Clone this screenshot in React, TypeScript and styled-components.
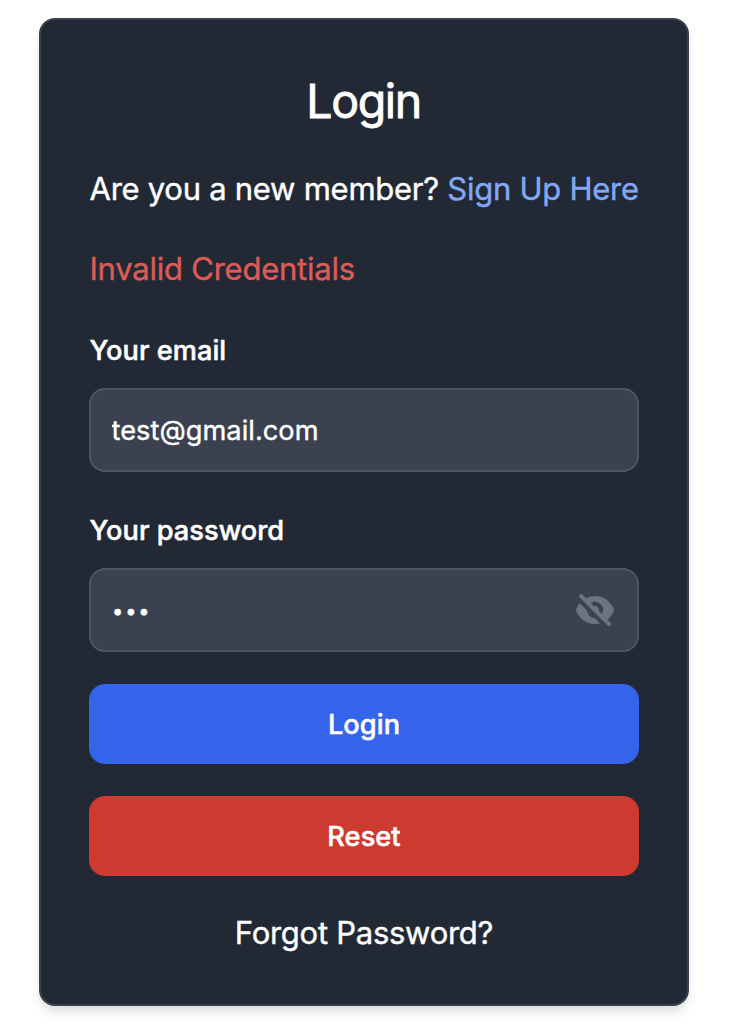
import React, { useState } from "react";
import styled, { createGlobalStyle } from "styled-components";
import { HiEye, HiEyeOff } from "react-icons/hi";

const GlobalStyle = createGlobalStyle`
  *, *::before, *::after { box-sizing: border-box; }
  body {
    margin: 0;
    background: #fff;
    font-family: Inter, "Liberation Sans", sans-serif;
    color: #fff;
    -webkit-font-smoothing: antialiased;
  }
`;

const Page = styled.main`
  height: 1034px;
  padding: 18px 43px 28px 39px;
  overflow: hidden;
`;

const Card = styled.form`
  height: 988px;
  padding: 45px 48px;
  background: #222935;
  border: 2px solid #394150;
  border-radius: 16px;
  box-shadow: 0 8px 12px -2px rgba(0, 0, 0, 0.1), 0 4px 8px -2px rgba(0, 0, 0, 0.06);
  display: flex;
  flex-direction: column;
`;

const Title = styled.h1`
  margin: 0;
  font-size: 46.5px;
  line-height: 72px;
  font-weight: 400;
  letter-spacing: -1.4px;
  text-indent: -1px;
  text-align: center;
  -webkit-text-stroke: 0.8px currentColor;
`;

const Text = styled.p<{ $error?: boolean }>`
  margin: ${(p) => (p.$error ? "32px 0 0" : "28px 0 0")};
  padding-left: 0.5px;
  font-size: 31px;
  line-height: 48px;
  font-weight: 400;
  letter-spacing: ${(p) => (p.$error ? "-0.23px" : "-0.26px")};
  white-space: nowrap;
  color: ${(p) => (p.$error ? "#dc5b57" : "#fff")};
  -webkit-text-stroke: 0.4px currentColor;
`;

const SignUp = styled.a`
  color: #81a8f5;
  text-decoration: none;
`;

const Label = styled.label<{ $first?: boolean }>`
  margin-top: ${(p) => (p.$first ? "38px" : "39px")};
  padding-left: 0.5px;
  font-size: 27.2px;
  line-height: 40px;
  font-weight: 500;
  letter-spacing: 0.03px;
  -webkit-text-stroke: 0.5px currentColor;
`;

const Field = styled.div`
  flex: none;
  height: 84px;
  margin-top: 17px;
  padding: 0 22px 0 20px;
  display: flex;
  align-items: center;
  background: #3b4150;
  border: 2px solid #4e5563;
  border-radius: 16px;
`;

const Input = styled.input<{ $masked?: boolean }>`
  flex: 1;
  min-width: 0;
  padding: ${(p) => (p.$masked ? "1px 0 0 1px" : "2px 0 0 0.5px")};
  border: 0;
  outline: 0;
  background: transparent;
  color: #fff;
  font: 400 28px/40px Inter, "Liberation Sans", sans-serif;
  font-size: ${(p) => (p.$masked ? "20px" : "27.2px")};
  letter-spacing: ${(p) => (p.$masked ? "1.9px" : "0.05px")};
  -webkit-text-stroke: 0.4px currentColor;
`;

const Toggle = styled.button`
  display: flex;
  padding: 0;
  border: 0;
  background: none;
  color: #6c7381;
  cursor: pointer;
`;

const Button = styled.button<{ $color: string }>`
  flex: none;
  height: 80px;
  margin-top: 32px;
  padding: 2px 0 0;
  border: 0;
  border-radius: 16px;
  background: ${(p) => p.$color};
  color: #fff;
  font: 500 27.2px/40px Inter, "Liberation Sans", sans-serif;
  letter-spacing: 0.05px;
  -webkit-text-stroke: 0.5px currentColor;
`;

const Forgot = styled.a`
  margin-top: 33px;
  font-size: 31px;
  line-height: 48px;
  font-weight: 400;
  letter-spacing: -0.27px;
  text-align: center;
  -webkit-text-stroke: 0.4px currentColor;
`;

export default function App() {
  const [visible, setVisible] = useState(false);
  return (
    <>
      <GlobalStyle />
      <Page>
        <Card onSubmit={(e) => e.preventDefault()}>
          <Title>Login</Title>
          <Text>
            Are you a new member? <SignUp>Sign Up Here</SignUp>
          </Text>
          <Text $error>Invalid Credentials</Text>
          <Label $first htmlFor="email">Your email</Label>
          <Field>
            <Input id="email" type="email" defaultValue="test@gmail.com" />
          </Field>
          <Label htmlFor="password">Your password</Label>
          <Field>
            <Input
              id="password"
              type={visible ? "text" : "password"}
              $masked={!visible}
              defaultValue="123"
            />
            <Toggle type="button" aria-label="Toggle password" onClick={() => setVisible(!visible)}>
              {visible ? <HiEye size={40} /> : <HiEyeOff size={40} />}
            </Toggle>
          </Field>
          <Button type="submit" $color="#3364e9">Login</Button>
          <Button type="reset" $color="#cd3a30">Reset</Button>
          <Forgot>Forgot Password?</Forgot>
        </Card>
      </Page>
    </>
  );
}
